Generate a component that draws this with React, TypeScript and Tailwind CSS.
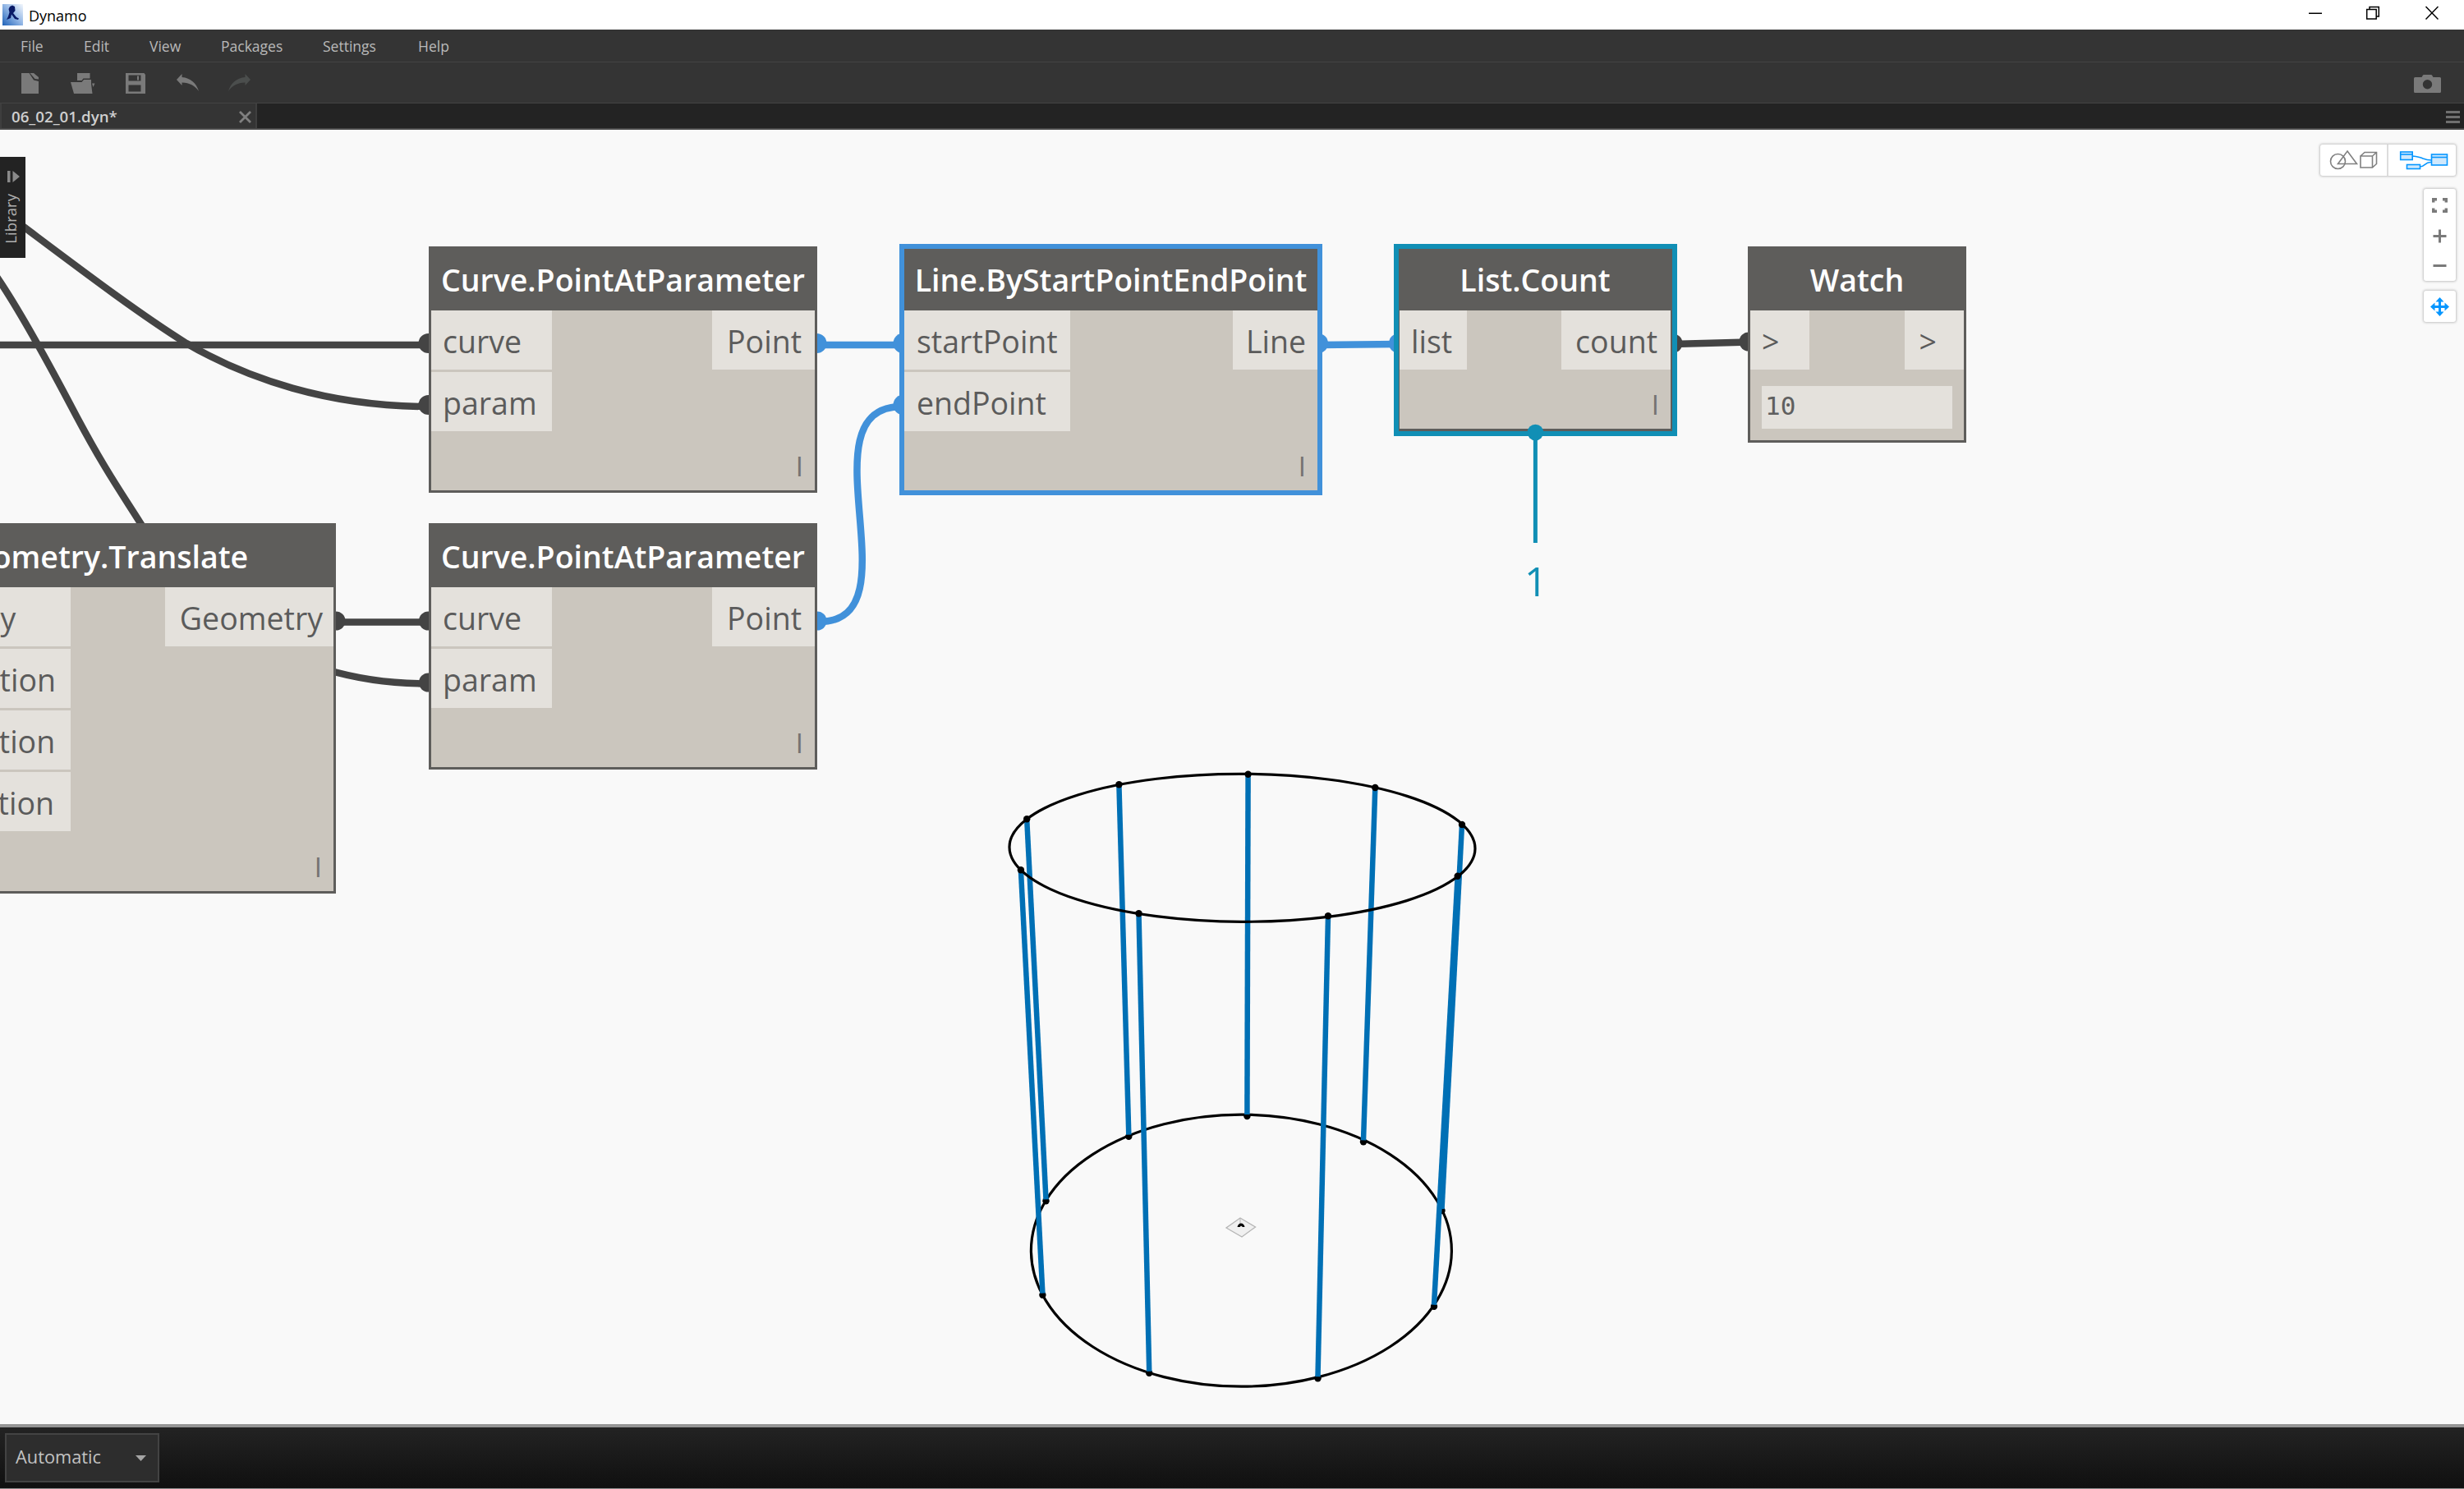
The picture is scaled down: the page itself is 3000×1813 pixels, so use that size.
import React from "react";

const MENU = [
  { label: "File", cls: "w-[77px]" },
  { label: "Edit", cls: "w-[80px]" },
  { label: "View", cls: "w-[87px]" },
  { label: "Packages", cls: "w-[124px]" },
  { label: "Settings", cls: "w-[116px]" },
  { label: "Help", cls: "w-[60px]" },
];

function TitleBar() {
  return (
    <div className="flex h-9 items-center bg-white text-black">
      <svg className="ml-[3px] block" width="25" height="26" viewBox="0 0 25 26">
        <defs>
          <linearGradient id="logo" x1="0" y1="1" x2="1" y2="0">
            <stop offset="0" stopColor="#1f62b8" />
            <stop offset="0.5" stopColor="#8fb4e4" />
            <stop offset="1" stopColor="#f4f8fd" />
          </linearGradient>
        </defs>
        <rect width="25" height="26" fill="url(#logo)" />
        <path d="M9 3L12 1.500L15 3L15.500 8L13 11L17 16L20 17.500L19 19L15 18L11 12.500L10 17L5 19L7 15L8.500 10L7.500 6Z" fill="#0a1a66" />
      </svg>
      <span className="ml-[7px] pt-px text-[18px] leading-none">Dynamo</span>
      <div className="ml-auto mr-[31px] flex h-full items-start">
        <svg className="block" width="158" height="36" viewBox="2811 0 158 36" fill="none" stroke="#000" strokeWidth="1.500">
          <path d="M2811 16.250H2827" />
          <rect x="2881.700" y="11.500" width="11.500" height="11.500" />
          <path d="M2885 11.500V8.500H2896.300V20H2893" />
          <path d="M2953.500 8L2968.500 23.500M2968.500 8L2953.500 23.500" />
        </svg>
      </div>
    </div>
  );
}

function MenuBar() {
  return (
    <div className="flex h-[40px] items-center border-b border-[#434343] bg-[#343434] pl-[25px] pt-[2px] text-[17.500px] text-[#b9b9b9]">
      {MENU.map((m) => (
        <span key={m.label} className={m.cls + " leading-none"}>{m.label}</span>
      ))}
    </div>
  );
}

function ToolBar() {
  return (
    <div className="flex h-[50px] items-center justify-between border-b border-[#434343] bg-[#343434] pl-[26px] pr-[28px] pt-[2px]">
      <svg className="block" width="280" height="26" viewBox="26 89 280 26" fill="#7a7a7a">
        <path d="M26 89H35.500L41 97.500L47 99V114H26Z" />
        <path d="M36.500 89H41L47 94V96.500L42.500 96Z" />
        <path d="M94 89H109.500V95.500H101.500L99.500 98H94Z" />
        <path d="M86 100H99.500L102 97H111V102L112.500 114H90Z" />
        <path d="M112 101.500H115.500L113.500 106Z" />
        <path fillRule="evenodd" d="M153 89H175.500L177 91V114H153ZM156.500 91.500V98.500H171.500V91.500ZM156.500 103.500V111.500H171.500V103.500ZM167 92.500H169V97.500H167Z" />
        <path d="M215 97L221.500 90V94C232 95 239 101 242 111C237 104 231 101 221.500 100.500V104Z" />
        <path fill="#4b4e4d" d="M305 97L298.500 90V94C288 95 281 101 278 111C283 104 289 101 298.500 100.500V104Z" />
      </svg>
      <svg className="block" width="33" height="22" viewBox="0 0 33 22">
        <path fill="#7a7a7a" fillRule="evenodd" d="M1.500 3H9.500L11 0.500Q11.300 0 12 0H21Q21.700 0 22 0.500L23.500 3H31.500Q33 3 33 4.500V20.500Q33 22 31.500 22H1.500Q0 22 0 20.500V4.500Q0 3 1.500 3ZM16.500 6A5.700 5.700 0 1 0 16.500 17.400A5.700 5.700 0 1 0 16.500 6Z" />
      </svg>
    </div>
  );
}

function TabBar() {
  return (
    <div className="flex h-8 items-stretch border-b-2 border-[#4a4a4a] bg-[#232323]">
      <div className="flex w-[313px] items-center border-x-2 border-[#3e3e3e] bg-[#343434] pl-3 pr-[5px] pt-[2px]">
        <span className="text-[18.700px] font-semibold leading-none text-[#cfcfcf]">06_02_01.dyn*</span>
        <svg className="ml-auto block" width="15" height="15" viewBox="0 0 15 15" stroke="#808080" strokeWidth="2.800">
          <path d="M1 1L14 14M14 1L1 14" />
        </svg>
      </div>
      <div className="ml-auto mr-[5px] flex flex-col justify-center gap-[3px] pt-[2px]">
        <i className="h-[3px] w-[17px] bg-[#6f6f6f]" />
        <i className="h-[3px] w-[17px] bg-[#6f6f6f]" />
        <i className="h-[3px] w-[17px] bg-[#6f6f6f]" />
      </div>
    </div>
  );
}

type NodeProps = {
  title: string;
  place: string;
  inputs: string[];
  output: string;
  inCls: string;
  outCls: string;
  frame?: string;
  children?: React.ReactNode;
};

function GraphNode({ title, place, inputs, output, inCls, outCls, frame, children }: NodeProps) {
  return (
    <div className={"absolute flex flex-col border-[3px] border-[#5e5d5b] bg-[#cbc6be] " + place}>
      <div className="flex h-[75px] shrink-0 items-center justify-center whitespace-nowrap bg-[#5e5d5b] text-[37.500px] font-semibold leading-none text-white">
        {title}
      </div>
      <div className="flex items-start justify-between text-[37.500px] leading-none text-[#5b5b5b]">
        <div className="flex flex-col gap-[3px]">
          {inputs.map((p) => (
            <div key={p} className={"flex h-[72px] items-center bg-[#e4e1dc] pt-[4px] " + inCls}>{p}</div>
          ))}
        </div>
        <div className={"flex h-[72px] items-center justify-end bg-[#e4e1dc] pt-[4px] " + outCls}>{output}</div>
      </div>
      {children ?? (
        <div className="mt-auto flex h-[72px] items-center justify-end pr-[14px] pt-[13px] text-[33px] leading-none text-[#757371]">I</div>
      )}
      {frame && <div className={"absolute " + frame} />}
    </div>
  );
}

const RODS = [
  [1250.2, 997.3, 1273.5, 1462.3],
  [1362.4, 955.3, 1374.3, 1383.7],
  [1519.6, 942.7, 1518.4, 1359],
  [1674.3, 959, 1660, 1390.3],
  [1780, 1004, 1755.5, 1474],
  [1774.7, 1066.7, 1746, 1590.7],
  [1617, 1115.3, 1604.5, 1678.3],
  [1386.5, 1112.3, 1399.2, 1671.7],
  [1242.9, 1059.3, 1269.4, 1576.7],
];

function Scene() {
  return (
    <svg className="absolute left-0 top-0 block" width="3000" height="1576" viewBox="0 158 3000 1576" fill="none">
      <g stroke="#444" strokeWidth="8.500">
        <path d="M0 420H522" />
        <path d="M10 262C85 318 163 378 227 418C300 461 400 495 522 495" />
        <path d="M-4 337C20 372 50 425 89.500 500S150 603 176 645" />
        <path d="M398 815.500C440 828 480 832.500 522 832.500" />
        <path d="M409 757.500H522" />
        <path d="M2037 419L2129 416.500" />
      </g>
      <g fill="#444">
        <circle cx="521.500" cy="418" r="12" />
        <circle cx="521.500" cy="493" r="12" />
        <circle cx="521.500" cy="756" r="11.500" />
        <circle cx="521.500" cy="831" r="11.500" />
        <circle cx="409" cy="756" r="11.500" />
        <circle cx="2037" cy="418" r="11.500" />
        <circle cx="2129" cy="416" r="11.500" />
      </g>
      <g stroke="#4191da" strokeWidth="8.500">
        <path d="M995 420H1098" />
        <path d="M998 757C1118 757 974 495 1098 495" />
        <path d="M1606 420L1702 419" />
      </g>
      <g fill="#4191da">
        <circle cx="994.500" cy="418" r="12" />
        <circle cx="995" cy="756" r="11.500" />
        <circle cx="1100" cy="418" r="12.500" />
        <circle cx="1100" cy="493" r="12.500" />
        <circle cx="1605" cy="418" r="12" />
        <circle cx="1703" cy="418" r="12" />
      </g>
      <ellipse cx="1511.400" cy="1522.700" rx="256" ry="165.500" stroke="#000" strokeWidth="3.200" />
      <g fill="#000">
        {RODS.map(([a, , c, d]) => (
          <circle key={a} cx={c} cy={d} r="4.200" />
        ))}
      </g>
      <g stroke="#0070b5" strokeWidth="6.500">
        {RODS.map(([a, b, c, d]) => (
          <line key={a} x1={a} y1={b} x2={c} y2={d - 2} />
        ))}
      </g>
      <ellipse cx="1512.500" cy="1032.300" rx="283.500" ry="90" stroke="#000" strokeWidth="3.200" transform="rotate(0.200 1512.500 1032.300)" />
      <g fill="#000">
        {RODS.map(([a, b]) => (
          <circle key={a} cx={a} cy={b} r="4.200" />
        ))}
      </g>
      <path d="M1510 1483L1528.500 1494L1512 1506L1493 1495Z" fill="#f0f0f0" stroke="#b5b5b5" strokeWidth="1.300" />
      <path d="M1510 1483V1490" stroke="#b5b5b5" />
      <path d="M1506.500 1494Q1507.500 1489.500 1511 1489.500T1515.500 1494H1513L1511 1492.500L1509.500 1494Z" fill="#000" />
    </svg>
  );
}

function Canvas() {
  return (
    <div className="relative h-[1576px] shrink-0 overflow-hidden bg-[#f9f9f9]">
      <Scene />
      <GraphNode title="Geometry.Translate" place="left-[-165px] top-[479px] h-[451px] w-[574px]" inputs={["geometry", "xTranslation", "yTranslation", "zTranslation"]} output="Geometry" inCls="w-[248px] pl-[14px]" outCls="w-[205px] pr-[13px]" />
      <GraphNode title="Curve.PointAtParameter" place="left-[522px] top-[142px] h-[300px] w-[473px]" inputs={["curve", "param"]} output="Point" inCls="w-[147px] pl-[14px]" outCls="w-[125px] pr-[16px]" />
      <GraphNode title="Curve.PointAtParameter" place="left-[522px] top-[479px] h-[300px] w-[473px]" inputs={["curve", "param"]} output="Point" inCls="w-[147px] pl-[14px]" outCls="w-[125px] pr-[16px]" />
      <GraphNode title="Line.ByStartPointEndPoint" place="left-[1098px] top-[142px] h-[300px] w-[509px]" inputs={["startPoint", "endPoint"]} output="Line" inCls="w-[202px] pl-[15px]" outCls="w-[103px] pr-[14px]" frame="-inset-[6px] border-[6px] border-[#4191da]" />
      <GraphNode title="List.Count" place="left-[1701px] top-[142px] h-[225px] w-[336px]" inputs={["list"]} output="count" inCls="w-[82px] pl-[14px]" outCls="w-[133px] pr-[16px]" frame="-left-[7px] -right-[8px] -top-[6px] -bottom-[9px] border-[6px] border-[#118fb5]" />
      <GraphNode title="Watch" place="left-[2128px] top-[142px] h-[239px] w-[266px]" inputs={[">"]} output=">" inCls="w-[72px] pl-[14px]" outCls="w-[72px] pr-[33px]">
        <div className="mx-[14px] mt-5 flex h-[52px] items-center bg-[#e4e1dc] pb-[3px] pl-[4px] font-['DejaVu_Sans_Mono',monospace] text-[31px] leading-none text-[#5f5f5f]">10</div>
      </GraphNode>
      <svg className="absolute left-[1859px] top-[358px] block" width="21" height="146" viewBox="1859 516 21 146">
        <circle cx="1869.400" cy="526.500" r="9.800" fill="#118fb5" />
        <path d="M1869.400 526V661" stroke="#118fb5" strokeWidth="5" />
      </svg>
      <div className="absolute left-[1841px] top-[525px] flex w-[58px] justify-center text-[49px] leading-none text-[#118fb5]">1</div>

      <div className="absolute left-0 top-[33px] flex h-[123px] w-[31px] flex-col items-center bg-[#232323] pr-[2px] pt-[17px] text-[#b0b0b0]">
        <svg className="ml-[3px] block" width="15" height="14" viewBox="0 0 15 14" fill="#8a8a8a"><path d="M0 0H3.500V14H0ZM6.500 0L15 7L6.500 14Z" /></svg>
        <span className="-ml-[3px] mt-[14px] rotate-180 text-[18.600px] leading-[20px] [writing-mode:vertical-rl]">Library</span>
      </div>

      <div className="absolute right-[10px] top-[18px] flex flex-col items-end">
        <div className="flex h-[38px] w-[165px] items-stretch rounded-[3px] bg-white shadow-[0_0_3px_1px_rgba(0,0,0,0.22)]">
          <svg className="block" width="165" height="38" viewBox="2825 176 165 38" fill="none" stroke="#808080" strokeWidth="1.600">
            <circle cx="2846.500" cy="196.500" r="9" />
            <path d="M2858 184L2869.500 199.500H2846.500Z" />
            <path d="M2874 190H2888.500V204H2874ZM2874 190L2879 185.500H2893.500V199.500L2888.500 204M2888.500 190L2893.500 185.500" />
            <path d="M2907 176V214" stroke="#dcdcdc" strokeWidth="2" />
            <g stroke="#0696ff" fill="#cfe8fc">
              <path d="M2937 190Q2946 191 2950 193Q2955 195 2960 195M2946 203C2953 203 2952 197 2960 197.500" fill="none" />
              <rect x="2922.700" y="185" width="14.500" height="9.500" />
              <path d="M2922.700 188H2937" />
              <rect x="2930.500" y="200.500" width="16" height="5" />
              <rect x="2960.500" y="188" width="19" height="13" />
              <path d="M2960.500 191.500H2979.500" />
            </g>
          </svg>
        </div>
        <div className="mt-4 h-[112px] w-[39px] rounded-[3px] bg-white shadow-[0_0_3px_1px_rgba(0,0,0,0.22)]">
          <svg className="block" width="39" height="112" viewBox="2951 230 39 112" fill="none" stroke="#7a7a7a" strokeWidth="3.400">
            <path d="M2962.700 246.500V242.700H2967M2974 242.700H2978.300V246.500M2978.300 253.500V257.300H2974M2967 257.300H2962.700V253.500" />
            <path d="M2962.500 287.500H2978.500M2970.500 279.500V295.500M2962.500 323.500H2978.500" strokeWidth="3" />
          </svg>
        </div>
        <div className="mt-3 h-[38px] w-[39px] rounded-[3px] bg-white shadow-[0_0_3px_1px_rgba(0,0,0,0.22)]">
          <svg className="block" width="39" height="38" viewBox="2951 354 39 38" fill="#0696ff">
            <path d="M2970.500 362L2975.500 367.500H2972V372H2976.500V368.500L2982 373.500L2976.500 378.500V375H2972V379.500H2975.500L2970.500 385L2965.500 379.500H2969V375H2964.500V378.500L2959 373.500L2964.500 368.500V372H2969V367.500H2965.500Z" />
          </svg>
        </div>
      </div>
    </div>
  );
}

function StatusBar() {
  return (
    <div className="flex h-[79px] items-start border-b border-t-4 border-b-[#8a8a8a] border-t-[#959595] bg-linear-to-b from-[#232323] to-[#101010] pl-[6px] pt-[7px]">
      <div className="flex h-[60px] w-[188px] items-center justify-between border-2 border-[#434343] bg-[#2d2d2d] pl-[11px] pr-[14px] text-[#c2c2c2]">
        <span className="pb-[2px] text-[21.800px] leading-none">Automatic</span>
        <svg className="block" width="13" height="7" viewBox="0 0 13 7"><path d="M0 0H13L6.500 7Z" fill="#a5a5a5" /></svg>
      </div>
    </div>
  );
}

export default function App() {
  return (
    <div className="flex h-[1813px] w-[3000px] flex-col overflow-hidden bg-[#f9f9f9] font-['Open_Sans','Noto_Sans',sans-serif]">
      <TitleBar />
      <MenuBar />
      <ToolBar />
      <TabBar />
      <Canvas />
      <StatusBar />
    </div>
  );
}
